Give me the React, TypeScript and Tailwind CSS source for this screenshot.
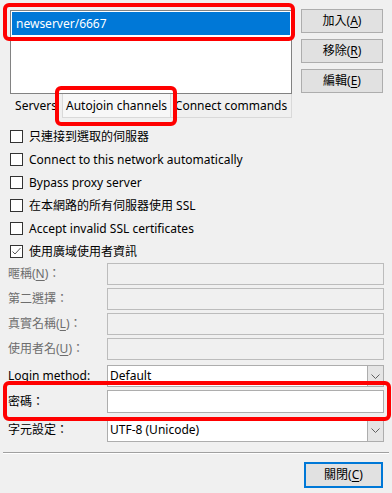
import React from "react";

const font = { fontFamily: '"Noto Sans", "Noto Sans CJK TC", sans-serif' };

function U({ children }: { children: React.ReactNode }) {
  return <span className="underline underline-offset-2 decoration-1">{children}</span>;
}

function Checkbox({ label, checked = false }: { label: string; checked?: boolean }) {
  return (
    <div className="flex items-center h-[23px]">
      <div className="w-[13px] h-[13px] border border-[#333333] bg-white flex items-center justify-center">
        {checked && (
          <svg width="11" height="11" viewBox="0 0 11 11">
            <polyline points="1.5,5.5 4,8 9.5,2" fill="none" stroke="#555" strokeWidth="1" />
          </svg>
        )}
      </div>
      <span className="ml-[6px] text-[#000] leading-none">{label}</span>
    </div>
  );
}

function Chevron() {
  return (
    <svg width="9" height="5" viewBox="0 0 9 5">
      <polyline points="0.5,0.5 4.5,4.5 8.5,0.5" fill="none" stroke="#606060" strokeWidth="1" />
    </svg>
  );
}

function FieldRow({ label, children, disabled = false, h = 22, mt = 0 }: { label: React.ReactNode; children?: React.ReactNode; disabled?: boolean; h?: number; mt?: number }) {
  return (
    <div className="flex items-center" style={{ height: h, marginTop: mt }}>
      <div className={"w-[99px] leading-none " + (disabled ? "text-[#6d6d6d]" : "text-black")}>{label}</div>
      {children}
    </div>
  );
}

function Button({ children, primary = false }: { children: React.ReactNode; primary?: boolean }) {
  return (
    <div
      className={
        "flex items-center justify-center bg-[#e1e1e1] leading-none " +
        (primary ? "border-2 border-[#0078d7]" : "border border-[#adadad]")
      }
      style={{ height: primary ? 26 : 24 }}
    >
      {children}
    </div>
  );
}

export default function App() {
  return (
    <div className="relative w-[392px] h-[493px] bg-[#f0f0f0] overflow-hidden text-[12px] text-black" style={font}>
      {/* top area */}
      <div className="flex pt-[9px] pl-[8px]">
        <div className="w-[285px] flex flex-col">
          <div className="ml-[2px] mt-[1px] w-[282px] h-[84px] bg-white border border-[#828282] p-[1px]">
            <div className="h-[23px] bg-[#0078d7] text-white flex items-center pl-[4px] leading-none">newserver/6667</div>
          </div>
          <div className="flex h-[24px] ml-[2px]">
            <div className="w-[52px] h-[23px] flex items-center justify-center leading-none">Servers</div>
            <div className="w-[109px] h-[24px] flex items-center justify-center leading-none bg-[#f7f7f7] border border-t-0 border-[#d9d9d9]">
              Autojoin channels
            </div>
            <div className="w-[121px] h-[24px] flex items-center justify-center leading-none border border-t-0 border-l-0 border-[#d9d9d9]">
              Connect commands
            </div>
          </div>
        </div>
        <div className="ml-[8px] w-[82px] flex flex-col gap-[6px]">
          <Button>
            加入(<U>A</U>)
          </Button>
          <Button>
            移除(<U>R</U>)
          </Button>
          <Button>
            編輯(<U>E</U>)
          </Button>
        </div>
      </div>

      {/* checkboxes */}
      <div className="mt-[7px] pl-[10px] flex flex-col">
        <Checkbox label="只連接到選取的伺服器" />
        <Checkbox label="Connect to this network automatically" />
        <Checkbox label="Bypass proxy server" />
        <Checkbox label="在本網路的所有伺服器使用 SSL" />
        <Checkbox label="Accept invalid SSL certificates" />
        <Checkbox label="使用廣域使用者資訊" checked />
      </div>

      {/* fields */}
      <div className="px-[8px] flex flex-col">
        <FieldRow disabled label={<>暱稱(<U>N</U>)：</>}>
          <div className="w-[277px] h-full border border-[#bcbcbc] bg-[#f0f0f0]" />
        </FieldRow>
        <FieldRow disabled mt={3} label="第二選擇：">
          <div className="w-[277px] h-full border border-[#bcbcbc] bg-[#f0f0f0]" />
        </FieldRow>
        <FieldRow disabled mt={3} label={<>真實名稱(<U>L</U>)：</>}>
          <div className="w-[277px] h-full border border-[#bcbcbc] bg-[#f0f0f0]" />
        </FieldRow>
        <FieldRow disabled mt={3} label={<>使用者名(<U>U</U>)：</>}>
          <div className="w-[277px] h-full border border-[#bcbcbc] bg-[#f0f0f0]" />
        </FieldRow>
        <FieldRow mt={5} label="Login method:">
          <div className="w-[277px] h-full border border-[#adadad] bg-white flex">
            <div className="flex-1 flex items-center pl-[2px] leading-none">Default</div>
            <div className="w-[16px] h-full bg-[#e5e5e5] border-l border-[#adadad] flex items-center justify-center">
              <Chevron />
            </div>
          </div>
        </FieldRow>
        <FieldRow mt={3} h={23} label="密碼：">
          <div className="w-[277px] h-full border border-[#adadad] bg-white" />
        </FieldRow>
        <FieldRow mt={5} h={24} label="字元設定：">
          <div className="w-[277px] h-full border border-[#adadad] bg-white flex">
            <div className="flex-1 flex items-center pl-[2px] leading-none">UTF-8 (Unicode)</div>
            <div className="w-[16px] h-full bg-[#e5e5e5] border-l border-[#adadad] flex items-center justify-center">
              <Chevron />
            </div>
          </div>
        </FieldRow>
      </div>

      {/* separator */}
      <div className="mt-[10px] mx-[3px] h-[1px] bg-[#a0a0a0]" />
      <div className="mx-[3px] h-[1px] bg-white" />

      {/* close */}
      <div className="flex justify-end pr-[9px] mt-[8px]">
        <div className="w-[79px]">
          <Button primary>
            關閉(<U>C</U>)
          </Button>
        </div>
      </div>

      {/* annotation boxes */}
      <div className="absolute left-[3px] top-[3px] w-[292px] h-[38px] border-[4px] border-[#ff0000] rounded-[6px] pointer-events-none" />
      <div className="absolute left-[55px] top-[86px] w-[122px] h-[40px] border-[4px] border-[#ff0000] rounded-[6px] pointer-events-none" />
      <div className="absolute left-[3px] top-[381px] w-[388px] h-[40px] border-[4px] border-[#ff0000] rounded-[6px] pointer-events-none" />
    </div>
  );
}
